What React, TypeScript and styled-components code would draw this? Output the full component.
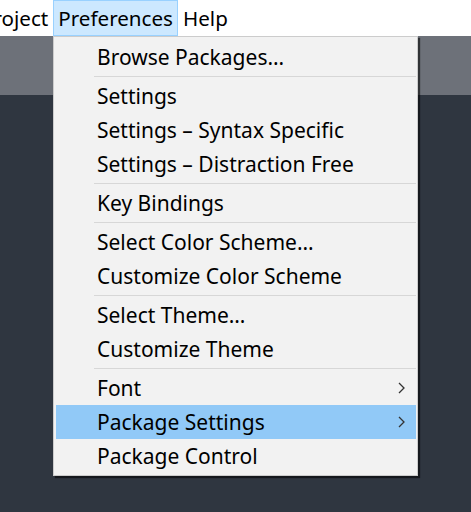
import React from "react";
import styled, { createGlobalStyle } from "styled-components";

const Global = createGlobalStyle`
  html, body { margin: 0; padding: 0; }
  body {
    width: 471px;
    height: 512px;
    overflow: hidden;
    font-family: "Noto Sans", "Open Sans", sans-serif;
    background: #2f3640;
  }
`;

const Page = styled.div`
  position: relative;
  width: 471px;
  height: 512px;
  display: flex;
  flex-direction: column;
  background: #2f3640;
`;

const MenuBar = styled.div`
  height: 36px;
  background: #ffffff;
  display: flex;
  align-items: stretch;
  overflow: hidden;
`;

const BarItem = styled.div<{ $active?: boolean; $shift?: number }>`
  display: flex;
  align-items: center;
  padding: 0 4px 1px 4px;
  margin-left: ${(p) => (p.$shift ? `${p.$shift}px` : "0")};
  font-size: 20.6px;
  color: #000;
  box-sizing: border-box;
  border: 1px solid ${(p) => (p.$active ? "#99d1ff" : "transparent")};
  background: ${(p) => (p.$active ? "#cce8ff" : "transparent")};
  white-space: nowrap;
`;

const Band = styled.div`
  height: 59px;
  background: #6d7179;
`;

const Dark = styled.div`
  flex: 1;
  background: #2f3640;
`;

const Menu = styled.div`
  position: absolute;
  left: 53px;
  top: 36px;
  width: 365px;
  box-sizing: border-box;
  background: #f2f2f2;
  border: 1px solid #cccccc;
  box-shadow: 2px 2px 1px rgba(0, 0, 0, 0.55);
  padding: 3px 1px 2px 2px;
  display: flex;
  flex-direction: column;
`;

const Item = styled.div<{ $hl?: boolean }>`
  height: 34px;
  display: flex;
  align-items: center;
  justify-content: space-between;
  padding: 0 11px 1px 41px;
  box-sizing: border-box;
  font-size: 21px;
  color: #000;
  background: ${(p) => (p.$hl ? "#91c9f7" : "transparent")};
  white-space: nowrap;
`;

const Sep = styled.div`
  height: 5px;
  display: flex;
  align-items: center;
  padding-left: 38px;
  &::after {
    content: "";
    flex: 1;
    height: 1px;
    background: #d7d7d7;
  }
`;

const Chevron = () => (
  <svg width="7" height="12" viewBox="0 0 7 12">
    <polyline points="1,1 6,6 1,11" fill="none" stroke="#333" strokeWidth="1.3" />
  </svg>
);

type Entry = { label?: string; sub?: boolean; hl?: boolean; sep?: boolean };

const entries: Entry[] = [
  { label: "Browse Packages…" },
  { sep: true },
  { label: "Settings" },
  { label: "Settings – Syntax Specific" },
  { label: "Settings – Distraction Free" },
  { sep: true },
  { label: "Key Bindings" },
  { sep: true },
  { label: "Select Color Scheme…" },
  { label: "Customize Color Scheme" },
  { sep: true },
  { label: "Select Theme…" },
  { label: "Customize Theme" },
  { sep: true },
  { label: "Font", sub: true },
  { label: "Package Settings", sub: true, hl: true },
  { label: "Package Control" },
];

export default function App() {
  return (
    <Page>
      <Global />
      <MenuBar>
        <BarItem $shift={-24}>Project</BarItem>
        <BarItem $active>Preferences</BarItem>
        <BarItem>Help</BarItem>
      </MenuBar>
      <Band />
      <Dark />
      <Menu>
        {entries.map((e, i) =>
          e.sep ? (
            <Sep key={i} />
          ) : (
            <Item key={i} $hl={e.hl}>
              <span>{e.label}</span>
              {e.sub && <Chevron />}
            </Item>
          )
        )}
      </Menu>
    </Page>
  );
}
